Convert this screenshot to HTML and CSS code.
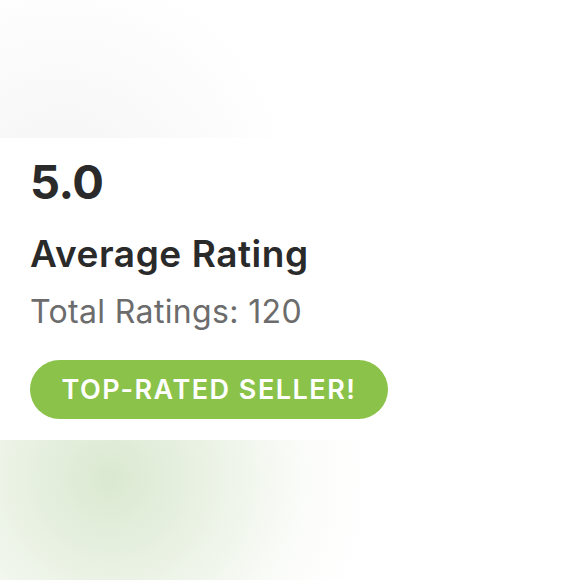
FILE: index.html
```html
<!DOCTYPE html>
<html lang="en">
<head>
<meta charset="utf-8">
<title>Rating</title>
<link rel="stylesheet" href="styles.css">
</head>
<body>
<section class="card">
  <div class="score">5.0</div>
  <h2 class="title">Average Rating</h2>
  <p class="total">Total Ratings: 120</p>
  <div class="badge">TOP-RATED SELLER!</div>
</section>
</body>
</html>
```
FILE: styles.css
```css
html {
  height: 100%;
  background:
    radial-gradient(circle 265px at 110px 478px, rgba(218, 232, 208, 1), rgba(226, 237, 218, 0.6) 45%, rgba(240, 245, 236, 0.25) 75%, rgba(255, 255, 255, 0) 100%),
    radial-gradient(circle 235px at 60px 200px, #f4f4f4, #fafafa 55%, #ffffff 100%);
  background-color: #fff;
}
body {
  margin: 0;
  font-family: Inter, "Open Sans", sans-serif;
}
.card {
  margin-top: 138px;
  height: 302px;
  box-sizing: border-box;
  background: #fff;
  padding: 20px 0 0 30px;
  display: flex;
  flex-direction: column;
  align-items: flex-start;
}
.score {
  font-size: 47px;
  line-height: 1;
  font-weight: 700;
  color: #2a2a2a;
  letter-spacing: -0.5px;
}
.title {
  margin: 30px 0 0;
  font-size: 37px;
  line-height: 1;
  font-weight: 600;
  color: #2a2a2a;
  letter-spacing: 0.55px;
}
.total {
  margin: 24px 0 0;
  font-size: 32px;
  line-height: 1;
  font-weight: 400;
  color: #6c6c6c;
  letter-spacing: 0.35px;
}
.badge {
  margin-top: 32px;
  width: 358px;
  height: 59px;
  border-radius: 30px;
  background: #8bc34a;
  color: #fff;
  font-size: 27px;
  font-weight: 600;
  display: flex;
  align-items: center;
  justify-content: center;
  letter-spacing: 1.5px;
}
```
